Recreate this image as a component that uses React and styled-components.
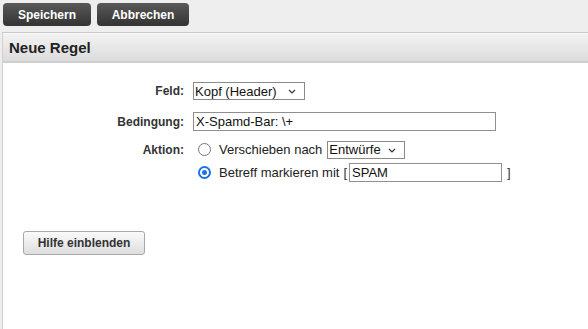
import React from 'react';
import styled, { createGlobalStyle } from 'styled-components';

const Global = createGlobalStyle`
  html, body {
    margin: 0;
    padding: 0;
    background: #eeeeee;
    font-family: "Liberation Sans", Arial, sans-serif;
    color: #333;
  }
`;

const Page = styled.div`
  width: 588px;
  height: 329px;
  overflow: hidden;
  display: flex;
  flex-direction: column;
`;

const Toolbar = styled.div`
  display: flex;
  gap: 6px;
  padding: 3px 3px 0;
  height: 29px;
  box-sizing: border-box;
`;

const DarkButton = styled.button`
  width: ${p => p.$w}px;
  height: 23px;
  border: none;
  border-radius: 4px;
  background: linear-gradient(#595959, #333333);
  color: #fff;
  font: bold 12px "Liberation Sans", Arial, sans-serif;
  padding: 0;
  cursor: pointer;
`;

const Panel = styled.div`
  flex: 1;
  margin-top: 3px;
  margin-left: 2px;
  border-top: 1px solid #c8c8c8;
  border-left: 1px solid #d0d0d0;
  background: #fff;
  display: flex;
  flex-direction: column;
`;

const PanelHeader = styled.div`
  height: 27px;
  border-top: 1px solid #fafafa;
  border-bottom: 2px solid #cfcfcf;
  background: linear-gradient(#f2f2f2, #dcdcdc);
  display: flex;
  align-items: center;
  padding-left: 6px;
  font: bold 15px "Liberation Sans", Arial, sans-serif;
  color: #222;
`;

const Form = styled.div`
  display: grid;
  grid-template-columns: 181px 1fr;
  column-gap: 9px;
  padding-top: 19px;
`;

const Label = styled.div`
  font: bold 12px "Liberation Sans", Arial, sans-serif;
  color: #333;
  height: ${p => p.$h}px;
  display: flex;
  align-items: center;
  justify-content: flex-end;
`;

const Cell = styled.div`
  display: flex;
  flex-direction: column;
  gap: ${p => p.$gap || 0}px;
  margin-bottom: ${p => p.$mb || 0}px;
`;

const Row = styled.div`
  display: flex;
  align-items: center;
  height: ${p => p.$h}px;
  font-size: 13px;
  color: #222;
`;

const SelectBox = styled.div`
  position: relative;
  width: ${p => p.$w}px;
  height: 18px;
  margin-left: ${p => p.$ml || 0}px;
  box-sizing: border-box;
  border: 1px solid #8a8a8a;
  font-size: 13px;
  color: #111;
  display: flex;
  align-items: center;
  padding-left: 1px;
  background: #fff;
`;

const Chevron = styled.svg`
  position: absolute;
  right: 8px;
  top: 6px;
`;

const TextInput = styled.div`
  width: ${p => p.$w}px;
  height: 19px;
  box-sizing: border-box;
  border: 1px solid #8f8f8f;
  font-size: 13px;
  color: #111;
  display: flex;
  align-items: center;
  padding-left: 2px;
  background: #fff;
`;

const Radio = styled.span`
  width: 13px;
  height: 13px;
  box-sizing: border-box;
  border-radius: 50%;
  border: ${p => (p.$checked ? '2px solid #1a73e8' : '1.5px solid #767676')};
  margin: 0 8px 0 5px;
  display: flex;
  align-items: center;
  justify-content: center;
  flex-shrink: 0;

  &::after {
    content: '';
    display: ${p => (p.$checked ? 'block' : 'none')};
    width: 5px;
    height: 5px;
    border-radius: 50%;
    background: #1a73e8;
  }
`;

const Bracket = styled.span`
  margin: 0 ${p => p.$r || 0}px 0 ${p => p.$l || 0}px;
  color: #333;
`;

const HelpButton = styled.button`
  margin: 49px 0 0 20px;
  width: 122px;
  height: 24px;
  border: 1px solid #a8a8a8;
  border-radius: 3px;
  background: linear-gradient(#fafafa, #dedede);
  font: bold 12px "Liberation Sans", Arial, sans-serif;
  color: #333;
  padding: 0;
  align-self: flex-start;
`;

const Select = ({ w, ml, value }) => (
  <SelectBox $w={w} $ml={ml}>
    {value}
    <Chevron width="8" height="5" viewBox="0 0 8 5">
      <path d="M1 1l3 3 3-3" fill="none" stroke="#333" strokeWidth="1.2" />
    </Chevron>
  </SelectBox>
);

export default function App() {
  return (
    <Page>
      <Global />
      <Toolbar>
        <DarkButton $w={88}>Speichern</DarkButton>
        <DarkButton $w={92}>Abbrechen</DarkButton>
      </Toolbar>
      <Panel>
        <PanelHeader>Neue Regel</PanelHeader>
        <Form>
          <Label $h={18}>Feld:</Label>
          <Cell $mb={12}>
            <Row $h={18}><Select w={112} value="Kopf (Header)" /></Row>
          </Cell>

          <Label $h={19}>Bedingung:</Label>
          <Cell $mb={9}>
            <Row $h={19}><TextInput $w={303}>X-Spamd-Bar: \+</TextInput></Row>
          </Cell>

          <Label $h={19}>Aktion:</Label>
          <Cell $gap={4}>
            <Row $h={19}>
              <Radio />
              Verschieben nach
              <Select w={78} ml={5} value="Entwürfe" />
            </Row>
            <Row $h={19}>
              <Radio $checked />
              Betreff markieren mit
              <Bracket $l={4} $r={2}>[</Bracket>
              <TextInput $w={153}>SPAM</TextInput>
              <Bracket $l={5}>]</Bracket>
            </Row>
          </Cell>
        </Form>
        <HelpButton>Hilfe einblenden</HelpButton>
      </Panel>
    </Page>
  );
}
